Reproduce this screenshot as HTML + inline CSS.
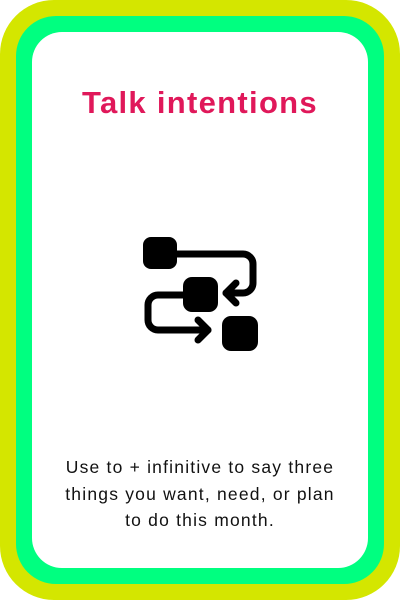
<!DOCTYPE html>
<html><head><style>
html,body{margin:0;padding:0;width:400px;height:600px;background:#fff;overflow:hidden}
.y{position:absolute;left:0;top:0;width:400px;height:600px;background:#d4e600;border-radius:54px}
.g{position:absolute;left:16px;top:16px;width:368px;height:568px;background:#00ff80;border-radius:40px}
.w{position:absolute;left:32px;top:32px;width:336px;height:536px;background:#fff;border-radius:30px}
h1{position:absolute;top:85px;left:0;width:400px;text-align:center;margin:0;font:bold 31px "Liberation Sans",sans-serif;color:#e0185a;letter-spacing:1.3px}
p{position:absolute;top:454px;left:0;width:400px;text-align:center;margin:0;font:17.5px/26.5px "Liberation Sans",sans-serif;color:#111;letter-spacing:1.2px;white-space:nowrap}
</style></head><body>
<div class="y"></div><div class="g"></div><div class="w"></div>
<h1>Talk intentions</h1>
<svg style="position:absolute;left:0;top:0" width="400" height="600">
<g fill="none" stroke="#000" stroke-width="7" stroke-linecap="round" stroke-linejoin="round">
<path d="M170 254 H243 a10 10 0 0 1 10 10 V283 a10 10 0 0 1 -10 10 H226"/>
<path d="M236 283 L226 293 L236 303"/>
<path d="M190 295 H158 a10 10 0 0 0 -10 10 V320 a10 10 0 0 0 10 10 H208"/>
<path d="M198 320 L208 330 L198 340"/>
</g>
<rect x="143" y="237" width="34" height="32" rx="8"/>
<rect x="183" y="277" width="35" height="35" rx="9"/>
<rect x="222" y="316" width="36" height="35" rx="9"/>
</svg>
<p>Use to + infinitive to say three<br>things you want, need, or plan<br>to do this month.</p>
</body></html>
